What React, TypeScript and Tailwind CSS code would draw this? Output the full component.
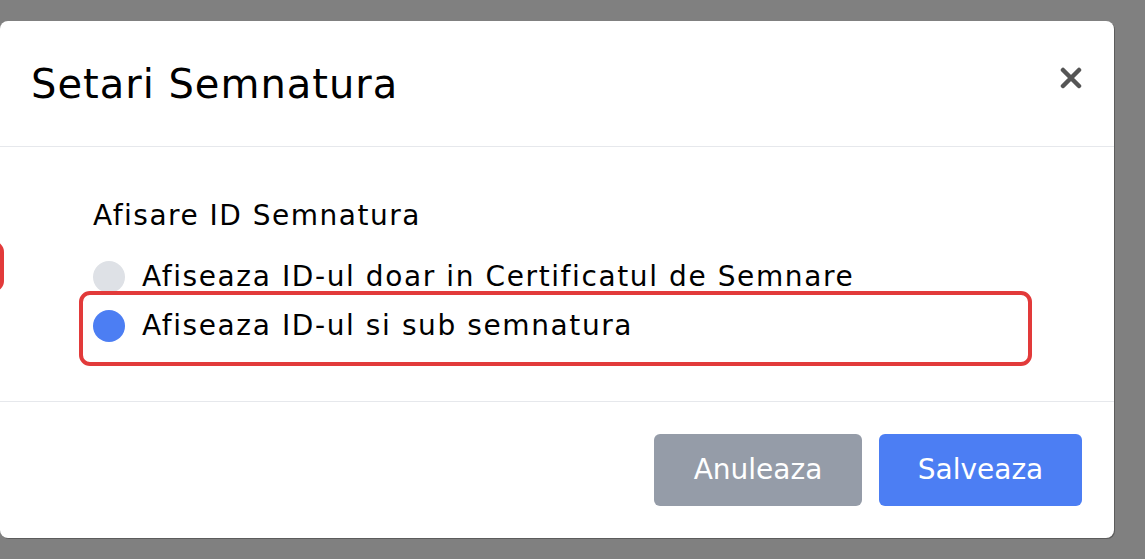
import React from "react";

const options = [
  {id: "cert", label: "Afiseaza ID-ul doar in Certificatul de Semnare", checked: false},
  {id: "sub", label: "Afiseaza ID-ul si sub semnatura", checked: true},
];

const CloseIcon = () => (
  <svg width="22" height="22" viewBox="0 0 22 22" fill="none">
    <path d="M3 3L19 19M19 3L3 19" stroke="#555555" strokeWidth="4.5" strokeLinecap="round" />
  </svg>
);

export default function App() {
  return (
    <div className="h-[559px] w-full overflow-hidden bg-[#808080] pt-[21px] font-['DejaVu_Sans',sans-serif] text-black">
      <div className="relative flex h-[517px] w-[1114px] flex-col rounded-lg bg-white shadow-[1px_1px_0_#5c5c5c]">
        <header className="flex h-[126px] items-center justify-between border-b border-[#e6e8ec] pl-[31px] pr-[32px]">
          <h2 className="text-[40px] leading-none tracking-[1px]">Setari Semnatura</h2>
          <button className="mt-[-12px]">
            <CloseIcon />
          </button>
        </header>

        <div className="relative h-[255px] border-b border-[#e6e8ec] pl-[93px] pt-[48px]">
          <p className="text-[28px] leading-[42px] tracking-[1.5px]">Afisare ID Semnatura</p>
          <div className="relative mt-[19px] flex flex-col gap-[7px]">
            {options.map((o) => (
              <label
                key={o.id}
                className="flex h-[42px] items-center gap-[17px] text-[28px] tracking-[1.6px]">
                <span
                  className={`h-[32px] w-[32px] shrink-0 rounded-full ${
                    o.checked ? "bg-[#4c7ef3]" : "bg-[#dee1e6]"
                  }`}></span>
                {o.label}
              </label>
            ))}
            <div className="pointer-events-none absolute left-[-14px] top-[35px] h-[75px] w-[953px] rounded-[11px] border-4 border-[#e23a3a]"></div>
          </div>
          <div className="pointer-events-none absolute left-[-50px] top-[94px] h-[51px] w-[54px] rounded-[11px] border-4 border-[#e23a3a]"></div>
        </div>

        <footer className="flex flex-1 items-start justify-end gap-[17px] pr-[32px] pt-[32px]">
          <button className="h-[72px] w-[208px] rounded-md bg-[#959ca8] text-[28px] text-white">
            Anuleaza
          </button>
          <button className="h-[72px] w-[203px] rounded-md bg-[#4c7ef3] text-[28px] text-white">
            Salveaza
          </button>
        </footer>
      </div>
    </div>
  );
}
